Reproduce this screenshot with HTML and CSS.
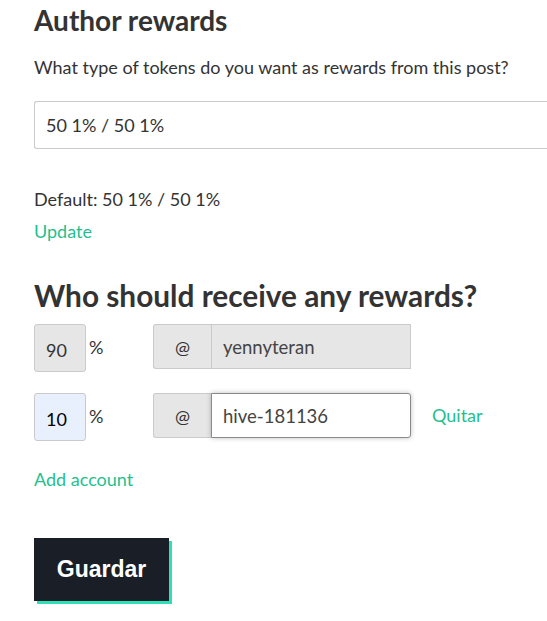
FILE: index.html
```html
<!DOCTYPE html>
<html>
<head>
<meta charset="utf-8">
<link rel="stylesheet" href="styles.css">
</head>
<body>
<div class="page">
  <h2 class="title">Author rewards</h2>
  <p class="lead">What type of tokens do you want as rewards from this post?</p>
  <div class="select">50 1% / 50 1%</div>
  <div class="default">Default: 50 1% / 50 1%</div>
  <a class="link update">Update</a>

  <h2 class="title second">Who should receive any rewards?</h2>

  <div class="row">
    <div class="pct disabled">90</div>
    <span class="pct-sign">%</span>
    <div class="group">
      <span class="addon">@</span>
      <div class="acct disabled">yennyteran</div>
    </div>
  </div>
  <div class="row">
    <div class="pct active">10</div>
    <span class="pct-sign">%</span>
    <div class="group">
      <span class="addon">@</span>
      <div class="acct editable">hive-181136</div>
    </div>
    <a class="link remove">Quitar</a>
  </div>

  <a class="link add">Add account</a>

  <button class="save">Guardar</button>
</div>
</body>
</html>
```
FILE: styles.css
```css
html, body {
  margin: 0;
  padding: 0;
  background: #fff;
}
body {
  font-family: "Source Sans Pro", Lato, "Noto Sans", sans-serif;
  color: #333;
}
.page {
  padding: 0 0 10px 34px;
  width: 513px;
}
.title {
  margin: 0;
  font-size: 28px;
  font-weight: 700;
  line-height: 40px;
  color: #333;
}
.lead {
  margin: 15px 0 0;
  font-size: 18px;
  line-height: 24px;
}
.select {
  margin-top: 22px;
  height: 48px;
  box-sizing: border-box;
  border: 1px solid #cacaca;
  border-right: none;
  border-radius: 3px 0 0 3px;
  padding: 0 11px;
  display: flex;
  align-items: center;
  font-size: 18px;
}
.default {
  margin-top: 38px;
  font-size: 18px;
  line-height: 24px;
}
.link {
  color: #1fbf8f;
  font-size: 18px;
  line-height: 24px;
  display: block;
}
.update {
  margin-top: 8px;
}
.second {
  margin-top: 33px;
  font-size: 29.8px;
}
.row {
  display: flex;
  align-items: flex-start;
  margin-top: 8px;
}
.row + .row {
  margin-top: 21px;
}
.pct {
  width: 52px;
  height: 48px;
  box-sizing: border-box;
  border: 1px solid #cacaca;
  border-radius: 3px;
  padding: 0 11px;
  display: flex;
  align-items: center;
  font-size: 18px;
  padding-top: 4px;
}
.pct.disabled {
  background: #e6e6e6;
}
.pct.active {
  background: #e8f0fe;
  color: #000;
}
.pct-sign {
  width: 67px;
  padding-left: 3px;
  box-sizing: border-box;
  font-size: 18px;
  line-height: 24px;
  margin-top: 11px;
}
.group {
  display: flex;
  width: 258px;
  height: 45px;
  box-sizing: border-box;
}
.addon {
  width: 58px;
  box-sizing: border-box;
  background: #e6e6e6;
  border: 1px solid #cacaca;
  border-right: none;
  border-radius: 3px 0 0 3px;
  display: flex;
  align-items: center;
  justify-content: center;
  font-size: 18px;
}
.acct {
  flex: 1;
  box-sizing: border-box;
  border: 1px solid #cacaca;
  display: flex;
  align-items: center;
  padding: 0 11px;
  font-size: 18.5px;
  color: #444;
}
.acct.disabled {
  background: #e6e6e6;
}
.acct.editable {
  background: #fff;
  border-color: #8a8a8a;
  border-radius: 0 3px 3px 0;
  box-shadow: 0 0 5px rgba(0,0,0,0.25);
}
.remove {
  margin-left: 21px;
  margin-top: 10px;
}
.add {
  margin-top: 26px;
}
.save {
  margin-top: 47px;
  width: 135px;
  height: 63px;
  border: none;
  border-radius: 0;
  background: #1a1f27;
  color: #fff;
  font-family: "Liberation Sans", Arial, sans-serif;
  font-weight: 700;
  font-size: 23px;
  box-shadow: 3px 3px 0 #2fe0b6;
  padding: 0;
  display: block;
}
```
